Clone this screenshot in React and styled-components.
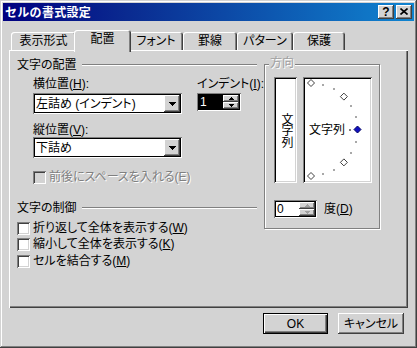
import React from "react";
import styled, { createGlobalStyle } from "styled-components";

const GRAY = "#d3d3d3";
const FONT = `"Liberation Sans", "Noto Sans CJK JP", "Noto Sans", sans-serif`;

const raised = `box-shadow: inset -1px -1px #404040, inset 1px 1px #fff, inset -2px -2px #808080, inset 2px 2px ${GRAY};`;
const sunken = `box-shadow: inset 1px 1px #808080, inset -1px -1px #fff, inset 2px 2px #404040, inset -2px -2px ${GRAY};`;
const fieldFrame = `box-shadow: inset 1px 1px #808080, inset -1px -1px #fff, inset 0 0 0 2px #000;`;

const GlobalStyle = createGlobalStyle`
  html, body { margin: 0; padding: 0; background: ${GRAY}; }
  body {
    font-family: ${FONT};
    font-size: 12px;
    line-height: 13px;
    color: #000;
    font-feature-settings: "palt";
  }
  *, *::before, *::after { box-sizing: border-box; }
  u { text-decoration: underline; text-underline-offset: 1px; }
`;

const Window = styled.div`
  width: 417px;
  height: 348px;
  background: ${GRAY};
  padding: 3px;
  box-shadow: inset -1px -1px #404040, inset 1px 1px ${GRAY}, inset -2px -2px #808080, inset 2px 2px #fff;
  display: flex;
  flex-direction: column;
`;

const TitleBar = styled.div`
  height: 18px;
  display: flex;
  align-items: center;
  padding: 0 2px 0 2px;
  background: linear-gradient(90deg, #000080 0%, #0a2a90 30%, #1084d0 100%);
`;

const TitleText = styled.span`
  color: #fff;
  font-weight: bold;
  font-size: 12px;
  line-height: 18px;
  letter-spacing: 0.3px;
  font-feature-settings: normal;
  padding-top: 1px;
`;

const CaptionButtons = styled.div`
  margin-left: auto;
  display: flex;
  gap: 2px;
`;

const CaptionBtn = styled.div`
  width: 16px;
  height: 14px;
  background: ${GRAY};
  ${raised}
  display: flex;
  align-items: center;
  justify-content: center;
  font-weight: bold;
  font-size: 12px;
  line-height: 14px;
  padding-bottom: 1px;
`;

const Body = styled.div`
  display: flex;
  flex-direction: column;
  padding: 9px 0 0 6px;
`;

const TabStrip = styled.div`
  display: flex;
  align-items: flex-end;
  height: 20px;
  padding-left: 2px;
`;

const Tab = styled.div`
  position: relative;
  z-index: ${(p) => (p.$active ? 2 : 1)};
  width: ${(p) => p.$w}px;
  height: ${(p) => (p.$active ? 22 : 18)}px;
  margin: 0 ${(p) => (p.$active ? "-2px" : "0")} ${(p) => (p.$active ? "-2px" : "0")};
  padding: ${(p) => (p.$active ? "1px 0 4px" : "1px 0 0")};
  background: ${GRAY};
  border-radius: 3px 3px 0 0;
  box-shadow: inset 1px 1px #fff, inset -1px 0 #404040, inset -2px 0 #808080;
  display: flex;
  align-items: center;
  justify-content: center;
  white-space: nowrap;
`;

const Panel = styled.div`
  width: 399px;
  height: 258px;
  background: ${GRAY};
  box-shadow: inset 1px 1px #fff, inset -1px -1px #404040, inset -2px -2px #808080;
  padding: 8px 0 0 8px;
  display: flex;
  gap: 7px;
`;

const LeftCol = styled.div`
  width: 240px;
  display: flex;
  flex-direction: column;
`;

const SectionHead = styled.div`
  display: flex;
  align-items: center;
  gap: 5px;
  height: 13px;
  margin-top: ${(p) => p.$mt || 0}px;
  white-space: nowrap;
  padding-top: 1px;
`;

const Etch = styled.div`
  flex: 1;
  height: 2px;
  border-top: 1px solid #808080;
  border-bottom: 1px solid #fff;
`;

const Indent = styled.div`
  display: flex;
  margin: 5px 0 0 16px;
`;

const SubCol = styled.div`
  display: flex;
  flex-direction: column;
  width: ${(p) => (p.$w ? `${p.$w}px` : "auto")};
  margin-left: ${(p) => p.$ml || 0}px;
`;

const Label = styled.div`
  height: 14px;
  line-height: 14px;
  padding-top: 1px;
  margin-top: ${(p) => p.$mt || 0}px;
  white-space: nowrap;
`;

const Select = styled.div`
  width: 149px;
  height: 21px;
  margin-top: ${(p) => p.$mt || 0}px;
  background: #fff;
  ${fieldFrame}
  display: flex;
  align-items: center;
  padding: 2px;
`;

const SelectText = styled.span`
  flex: 1;
  padding: 1px 0 0 1px;
  line-height: 14px;
  white-space: nowrap;
`;

const DropBtn = styled.div`
  width: 16px;
  height: 17px;
  background: ${GRAY};
  ${raised}
  display: flex;
  align-items: center;
  justify-content: center;
`;

const SpinBox = styled.div`
  width: ${(p) => p.$w}px;
  height: 18px;
  margin-top: ${(p) => p.$mt || 0}px;
  background: #fff;
  ${fieldFrame}
  display: flex;
  padding: 2px;
`;

const SpinField = styled.div`
  flex: 1;
  background: ${(p) => (p.$selected ? "#000" : "#fff")};
  color: ${(p) => (p.$selected ? "#fff" : "#000")};
  font-size: 12px;
  line-height: 14px;
  padding-left: 1px;
`;

const SpinButtons = styled.div`
  width: 16px;
  display: flex;
  flex-direction: column;
`;

const SpinBtn = styled.div`
  flex: 1;
  background: ${GRAY};
  ${raised}
  display: flex;
  align-items: center;
  justify-content: center;
`;

const CheckRow = styled.div`
  display: flex;
  align-items: center;
  gap: 3px;
  height: 16px;
  margin-top: ${(p) => p.$mt || 0}px;
  white-space: nowrap;
  color: ${(p) => (p.$disabled ? "#808080" : "#000")};
  text-shadow: ${(p) => (p.$disabled ? "1px 1px #fff" : "none")};
`;

const CheckText = styled.span`
  padding-top: 1px;
`;

const CheckBox = styled.span`
  flex: none;
  width: 13px;
  height: 13px;
  background: ${(p) => (p.$disabled ? GRAY : "#fff")};
  ${sunken}
`;

const Group = styled.div`
  position: relative;
  width: 116px;
  height: 165px;
  margin-top: 6px;
  border: 1px solid #808080;
  box-shadow: inset 1px 1px #fff, 1px 1px #fff;
  padding: 12px 0 0 9px;
`;

const Legend = styled.span`
  position: absolute;
  top: -8px;
  left: 4px;
  padding: 0 1px;
  background: ${GRAY};
  color: #a0a0a0;
  text-shadow: 1px 1px #fff;
  line-height: 13px;
`;

const DialRow = styled.div`
  display: flex;
  gap: 6px;
`;

const WhiteBox = styled.div`
  position: relative;
  width: ${(p) => p.$w}px;
  height: 106px;
  background: #fff;
  box-shadow: inset 1px 1px #808080, inset -1px -1px #fff, inset 2px 2px #000, inset -2px -2px ${GRAY};
  display: flex;
  align-items: center;
  justify-content: ${(p) => (p.$center ? "center" : "flex-start")};
  padding-left: ${(p) => (p.$center ? 0 : 6)}px;
`;

const VerticalText = styled.span`
  writing-mode: vertical-rl;
  text-orientation: upright;
  line-height: 13px;
  letter-spacing: -0.5px;
`;

const DialText = styled.span`
  position: relative;
  z-index: 1;
  white-space: nowrap;
  line-height: 13px;
  padding-top: 1px;
`;

const DialSvg = styled.svg`
  position: absolute;
  left: 0;
  top: 0;
`;

const DegreeRow = styled.div`
  display: flex;
  align-items: center;
  gap: 7px;
  margin-top: 17px;
`;

const ButtonRow = styled.div`
  width: 399px;
  display: flex;
  justify-content: flex-end;
  gap: 10px;
  padding-right: 4px;
  margin-top: 5px;
`;

const PushButton = styled.div`
  width: ${(p) => p.$w}px;
  height: 21px;
  background: ${GRAY};
  display: flex;
  align-items: center;
  justify-content: center;
  line-height: 14px;
  box-shadow: ${(p) =>
    p.$default
      ? "inset 0 0 0 1px #000, inset 2px 2px #fff, inset -2px -2px #404040, inset -3px -3px #808080"
      : "inset -1px -1px #404040, inset 1px 1px #fff, inset -2px -2px #808080"};
`;

const DownArrow = () => (
  <svg width="7" height="4" viewBox="0 0 7 4" shapeRendering="crispEdges">
    <polygon points="0,0 7,0 3.5,4" fill="#000" />
  </svg>
);

const SmallArrow = ({ up, color = "#000" }) => (
  <svg width="5" height="3" viewBox="0 0 5 3" shapeRendering="crispEdges">
    <polygon points={up ? "2.5,0 5,3 0,3" : "0,0 5,0 2.5,3"} fill={color} />
  </svg>
);

const Spinner = ({ w, mt, value, selected, disabledArrows }) => (
  <SpinBox $w={w} $mt={mt}>
    <SpinField $selected={selected}>{value}</SpinField>
    <SpinButtons>
      <SpinBtn>
        <SmallArrow up color={disabledArrows ? "#a0a0a0" : "#000"} />
      </SpinBtn>
      <SpinBtn>
        <SmallArrow color={disabledArrows ? "#a0a0a0" : "#000"} />
      </SpinBtn>
    </SpinButtons>
  </SpinBox>
);

function Dial() {
  const cx = 8;
  const cy = 52.5;
  const r = 46.5;
  const marks = [];
  for (let a = 90; a >= -90; a -= 15) {
    const rad = (a * Math.PI) / 180;
    const x = cx + r * Math.cos(rad);
    const y = cy - r * Math.sin(rad);
    if (a % 45 === 0) {
      const s = 3.5;
      const blue = a === 0;
      marks.push(
        <polygon
          key={a}
          points={`${x},${y - s} ${x + s},${y} ${x},${y + s} ${x - s},${y}`}
          fill={blue ? "#1010c0" : "#fff"}
          stroke={blue ? "#000060" : "#404040"}
          strokeWidth="1"
        />
      );
    } else {
      marks.push(
        <rect key={a} x={Math.round(x) - 1} y={Math.round(y) - 1} width="2" height="2" fill="#a8a8a8" shapeRendering="crispEdges" />
      );
    }
  }
  return (
    <DialSvg width="69" height="106" viewBox="0 0 69 106">
      {marks}
      <rect x="46" y="52" width="2" height="2" fill="#808080" shapeRendering="crispEdges" />
    </DialSvg>
  );
}

const tabs = [
  { label: "表示形式", w: 65 },
  { label: "配置", w: 57, active: true },
  { label: "フォント", w: 54 },
  { label: "罫線", w: 54 },
  { label: "パターン", w: 56 },
  { label: "保護", w: 52 },
];

export default function App() {
  return (
    <>
      <GlobalStyle />
      <Window>
        <TitleBar>
          <TitleText>セルの書式設定</TitleText>
          <CaptionButtons>
            <CaptionBtn>?</CaptionBtn>
            <CaptionBtn>
              <svg width="8" height="7" viewBox="0 0 8 7">
                <path d="M0.5 0.5 L7.5 6.5 M7.5 0.5 L0.5 6.5" stroke="#000" strokeWidth="1.6" />
              </svg>
            </CaptionBtn>
          </CaptionButtons>
        </TitleBar>
        <Body>
          <TabStrip>
            {tabs.map((t) => (
              <Tab key={t.label} $w={t.w} $active={t.active}>
                {t.label}
              </Tab>
            ))}
          </TabStrip>
          <Panel>
            <LeftCol>
              <SectionHead>
                文字の配置
                <Etch />
              </SectionHead>
              <Indent>
                <SubCol $w={149}>
                  <Label>
                    横位置(<u>H</u>):
                  </Label>
                  <Select $mt={3}>
                    <SelectText>左詰め (インデント)</SelectText>
                    <DropBtn>
                      <DownArrow />
                    </DropBtn>
                  </Select>
                  <Label $mt={8}>
                    縦位置(<u>V</u>):
                  </Label>
                  <Select $mt={1}>
                    <SelectText>下詰め</SelectText>
                    <DropBtn>
                      <DownArrow />
                    </DropBtn>
                  </Select>
                  <CheckRow $mt={11} $disabled>
                    <CheckBox $disabled />
                    <CheckText>前後にスペースを入れる(E)</CheckText>
                  </CheckRow>
                </SubCol>
                <SubCol $ml={15}>
                  <Label>
                    インデント(<u>I</u>):
                  </Label>
                  <Spinner w={44} mt={3} value="1" selected />
                </SubCol>
              </Indent>
              <SectionHead $mt={16}>
                文字の制御
                <Etch />
              </SectionHead>
              <CheckRow $mt={6}>
                <CheckBox />
                <CheckText>
                  折り返して全体を表示する(<u>W</u>)
                </CheckText>
              </CheckRow>
              <CheckRow>
                <CheckBox />
                <CheckText>
                  縮小して全体を表示する(<u>K</u>)
                </CheckText>
              </CheckRow>
              <CheckRow $mt={1}>
                <CheckBox />
                <CheckText>
                  セルを結合する(<u>M</u>)
                </CheckText>
              </CheckRow>
            </LeftCol>
            <Group>
              <Legend>方向</Legend>
              <DialRow>
                <WhiteBox $w={23} $center>
                  <VerticalText>文字列</VerticalText>
                </WhiteBox>
                <WhiteBox $w={69}>
                  <Dial />
                  <DialText>文字列</DialText>
                </WhiteBox>
              </DialRow>
              <DegreeRow>
                <Spinner w={43} value="0" disabledArrows />
                <CheckText>
                  度(<u>D</u>)
                </CheckText>
              </DegreeRow>
            </Group>
          </Panel>
          <ButtonRow>
            <PushButton $w={65} $default>
              OK
            </PushButton>
            <PushButton $w={66}>キャンセル</PushButton>
          </ButtonRow>
        </Body>
      </Window>
    </>
  );
}
